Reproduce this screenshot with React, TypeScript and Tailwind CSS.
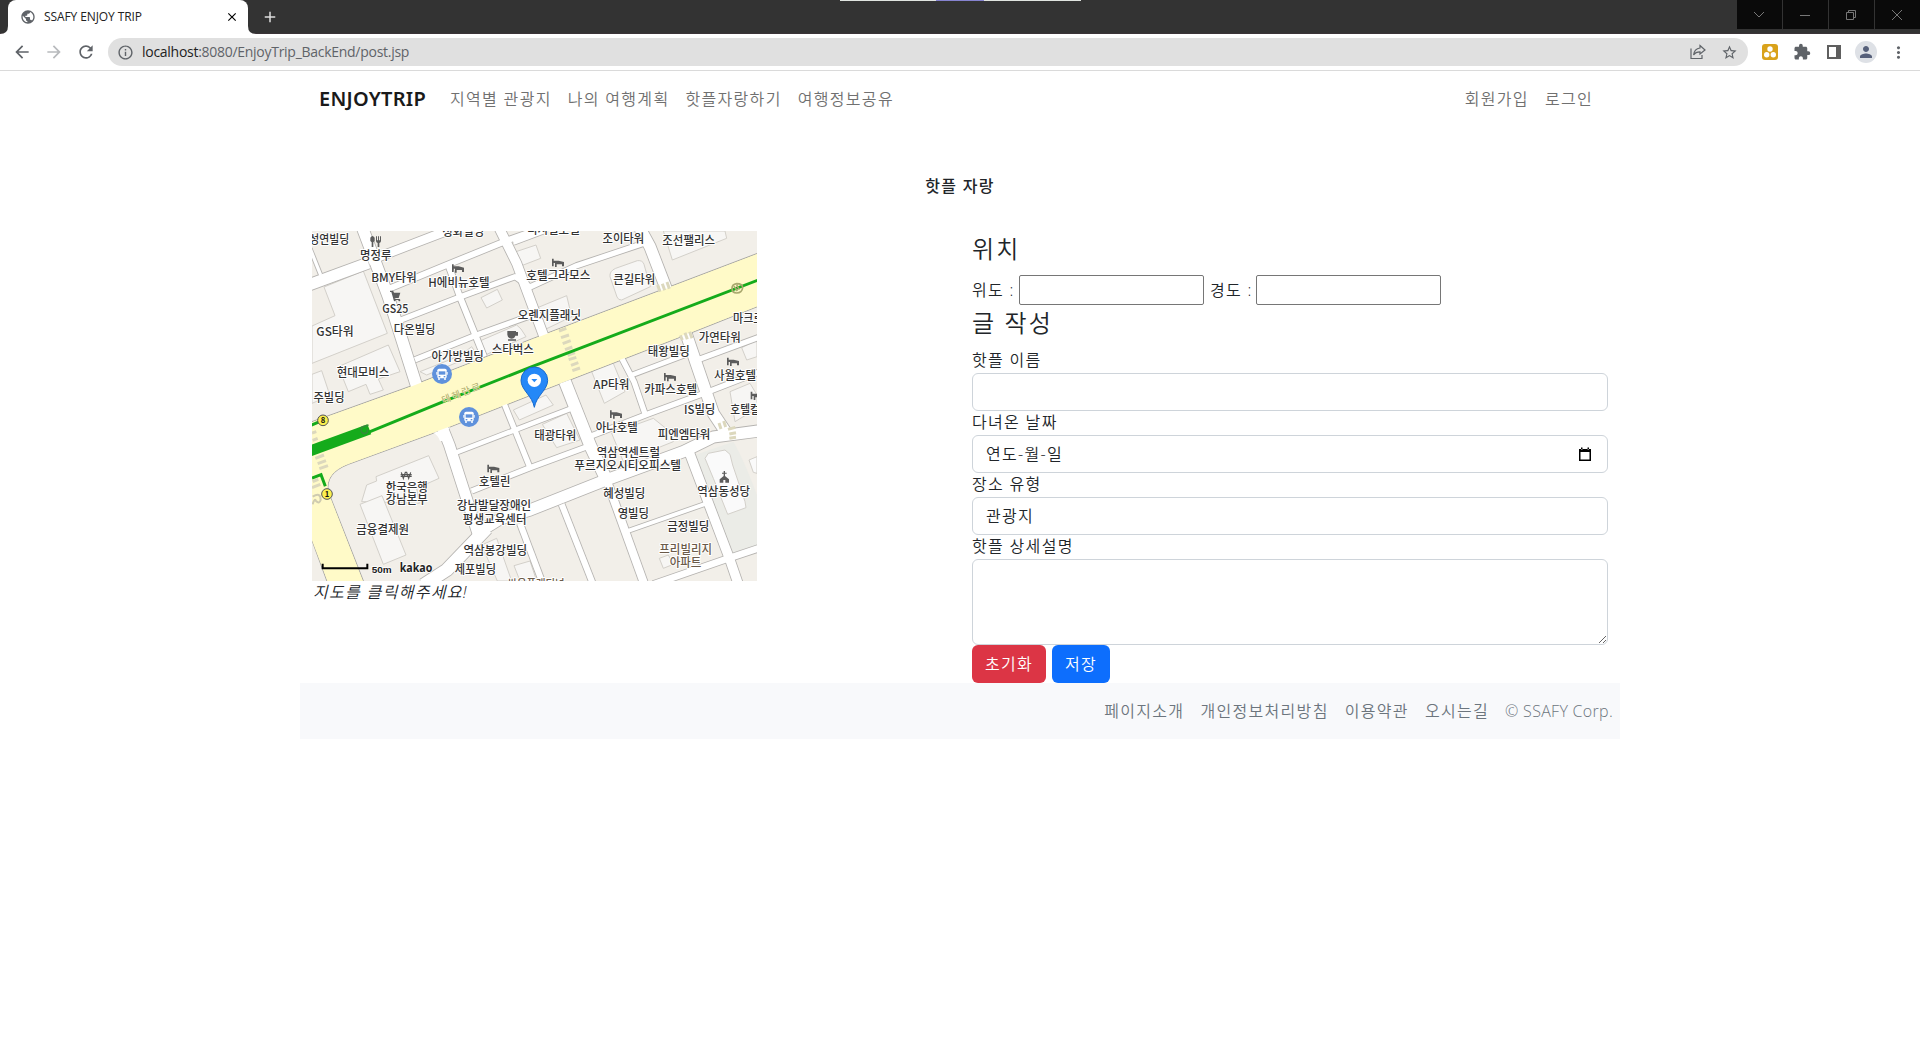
import React from "react";
import {
  MdAdd,
  MdArrowBack,
  MdArrowForward,
  MdClose,
  MdExtension,
  MdInfoOutline,
  MdMoreVert,
  MdPerson,
  MdPublic,
  MdRefresh,
  MdStarBorder,
} from "react-icons/md";

type Road = [string, number];
type Label = [string, number, number, number];

// Map units are thirds of a pixel; the visible window starts at (36, 18).
const roads: Road[] = [
  ["M30 70 L62 150", 10],
  ["M188 10 L265 215 L352 490", 34],
  ["M20 182 L205 114", 34],
  ["M205 108 L330 60 L450 14", 26],
  ["M265 192 L440 120 L625 45 L730 8", 18],
  ["M598 10 L650 115 L732 335", 28],
  ["M295 288 L480 216 L645 155 L690 186 L830 122 L1040 52", 16],
  ["M445 120 L480 216 L552 395", 18],
  ["M345 404 L530 330 L720 262", 16],
  ["M740 14 L640 52", 16],
  ["M1020 10 L1050 65 L1102 200", 34],
  ["M424 600 L448 660 L535 930", 32],
  ["M560 910 L440 1035 L370 1080", 38],
  ["M530 925 L600 882 L690 855 L910 768 L1150 680 L1240 636 L1390 616", 34],
  ["M612 535 L690 728", 16],
  ["M460 686 L720 586 L810 552", 14],
  ["M515 798 L690 728 L865 664", 16],
  ["M795 470 L872 665 L922 770", 36],
  ["M920 765 L1032 1075", 24],
  ["M785 838 L878 1075", 18],
  ["M660 895 L728 1075", 18],
  ["M963 395 L1002 470 L1038 575", 16],
  ["M990 452 L1170 384", 14],
  ["M1158 325 L1240 565 L1280 625", 34],
  ["M1200 402 L1390 332", 16],
  ["M875 632 L1050 565 L1225 500 L1390 436", 16],
  ["M1165 675 L1290 1005 L1314 1075", 28],
  ["M978 920 L1220 835", 12],
  ["M1060 1078 L1285 1000 L1390 965", 20],
];

const buildings = [
  "M72 186 L190 138 L262 325 L36 415 L36 303 L105 272 Z",
  "M36 448 L36 535 L90 512 L65 437 Z",
  "M115 425 L265 360 L300 440 L235 462 L250 495 L210 508 L198 478 L145 500 Z",
  "M543 218 L592 193 L607 225 L560 249 Z",
  "M535 350 L650 300 L663 312 L678 335 L560 388 Z",
  "M648 80 L708 60 L722 100 L665 122 Z",
  "M1090 18 L1275 18 L1280 40 L1117 105 Z",
  "M947 130 L1012 107 Q1028 105 1032 118 L1051 185 L965 225 Q955 226 951 216 L930 155 Q928 138 947 130 Z",
  "M708 250 L800 212 L815 275 L738 312 Z",
  "M875 440 L937 408 L975 500 L913 535 Z",
  "M1325 368 L1371 345 L1371 395 L1340 405 Z",
  "M640 555 L738 510 L760 540 L658 585 Z",
  "M360 440 L480 392 L515 365 L530 388 L380 450 Z",
  "M228 755 L386 692 L417 760 L350 790 L358 835 L185 830 L200 780 L230 768 Z",
  "M180 838 L246 812 L318 990 L250 1018 Z",
  "M545 960 L590 940 L635 1068 L592 1068 Z",
  "M642 1022 L690 1008 L710 1068 L660 1068 Z",
  "M727 598 L800 565 L840 645 L770 668 Z",
  "M935 625 L1060 580 L1110 620 L1120 650 L970 710 Z",
  "M1078 1000 L1105 990 L1120 1018 L1090 1030 Z",
  "M1290 500 L1350 475 L1371 510 L1371 550 L1305 590 Z",
];

const labels: Label[] = [
  ["성연빌딩", 88, 57, 120],
  ["명정루", 227, 104, 94],
  ["BMY타워", 282, 170, 136],
  ["H에비뉴호텔", 477, 185, 184],
  ["GS25", 286, 263, 78],
  ["GS타워", 105, 332, 112],
  ["다온빌딩", 344, 326, 125],
  ["정화빌딩", 490, 34, 126],
  ["스타벅스", 638, 388, 126],
  ["아가방빌딩", 473, 407, 157],
  ["현대모비스", 189, 455, 158],
  ["주빌딩", 87, 530, 93],
  ["오렌지플래닛", 748, 286, 190],
  ["호텔그라모스", 775, 166, 192],
  ["디지털호텔", 760, 26, 158],
  ["조이타워", 970, 53, 125],
  ["조선팰리스", 1166, 60, 158],
  ["큰길타워", 1003, 178, 126],
  ["마크로젠", 1360, 295, 122],
  ["가연타워", 1259, 352, 126],
  ["태왕빌딩", 1106, 393, 126],
  ["사월호텔", 1305, 464, 126],
  ["AP타워", 934, 491, 108],
  ["카파스호텔", 1112, 507, 159],
  ["IS빌딩", 1199, 566, 94],
  ["호텔컬리", 1350, 566, 118],
  ["태광타워", 766, 646, 126],
  ["아나호텔", 950, 622, 126],
  ["피엔엠타워", 1152, 642, 158],
  ["역삼역센트럴", 985, 696, 190],
  ["푸르지오시티오피스텔", 983, 736, 320],
  ["역삼동성당", 1271, 814, 158],
  ["혜성빌딩", 973, 820, 126],
  ["영빌딩", 1000, 880, 94],
  ["금정빌딩", 1165, 917, 126],
  ["호텔린", 584, 784, 94],
  ["강남발달장애인", 582, 856, 223],
  ["평생교육센터", 584, 896, 191],
  ["한국은행", 320, 800, 126],
  ["강남본부", 320, 838, 126],
  ["금융결제원", 248, 926, 158],
  ["역삼봉강빌딩", 586, 989, 191],
  ["제포빌딩", 526, 1048, 124],
];

function Bed({ x, y }: { x: number; y: number }) {
  return (
    <path
      transform={`translate(${x} ${y})`}
      d="M-18 -13 H-13 V-7 H2 L18 -3 V10 H12 V4 H-4 V12 H-9 V0 H-13 V10 H-18 Z"
      fill="#5c5c5c"
    />
  );
}

function BusStop({ x, y }: { x: number; y: number }) {
  return (
    <g transform={`translate(${x} ${y})`}>
      <circle r="30" fill="#5f91dc" />
      <rect x="-14" y="-16" width="28" height="29" rx="5" fill="#fff" />
      <rect x="-10" y="-8" width="20" height="10" fill="#5f91dc" />
      <rect x="-10" y="6" width="5" height="4" fill="#5f91dc" />
      <rect x="5" y="6" width="5" height="4" fill="#5f91dc" />
      <path d="M-12 13 h6 v4 h-6 Z M6 13 h6 v4 h-6 Z M-17 -6 h3 v8 h-3 Z M14 -6 h3 v8 h-3 Z" fill="#fff" />
    </g>
  );
}

function Exit({ x, y, n }: { x: number; y: number; n: string }) {
  return (
    <g transform={`translate(${x} ${y})`}>
      <circle r="16" fill="#fbf04e" stroke="#555" strokeWidth="3" />
      <text y="8" textAnchor="middle" fontSize="23" fontWeight="700" fill="#111">
        {n}
      </text>
    </g>
  );
}

function KakaoMap() {
  return (
    <svg
      viewBox="36 18 1335 1050"
      className="block h-[350px] w-[445px] font-['Noto_Sans_CJK_KR',sans-serif]"
    >
      <rect x="36" y="18" width="1335" height="1050" fill="#f2efe9" />
      <path d="M1185 690 L1300 650 Q1330 700 1371 810 L1371 965 L1300 990 Z" fill="#ebece7" />
      <g fill="#f7f6f4" stroke="#d3d0ca" strokeWidth="3">
        {buildings.map((d) => (
          <path key={d} d={d} />
        ))}
        <path
          d="M1215 700 L1225 685 L1275 675 L1290 688 L1298 720 L1335 830 L1338 848 L1283 868 L1240 760 Z"
          fill="#fafafa"
        />
        <path d="M1347 705 L1371 695 V745 L1360 742 Z" fill="#fafafa" />
      </g>
      <g fill="none" stroke="#b5b3b0" strokeLinejoin="round">
        {roads.map(([d, w]) => (
          <path key={d} d={d} strokeWidth={w + 5} />
        ))}
      </g>
      <path
        d="M30 592 L330 484 L700 340 L1075 198 L1380 82 V242 L1150 333 L720 500 L440 610 L145 718 Q75 745 85 800 L195 1080 H85 L30 930 Z"
        fill="#fffac8"
        stroke="#a9a8a5"
        strokeWidth="3"
      />
      <g fill="none" stroke="#fff" strokeLinejoin="round">
        {roads.map(([d, w]) => (
          <path key={d} d={d} strokeWidth={w} />
        ))}
      </g>
      <path d="M400 624 L450 606 Q436 622 446 648 L420 648 Q414 630 400 624 Z" fill="#fff" />
      <path
        d="M30 594 L330 486 L700 342 L1075 200 L1380 84 V240 L1150 331 L720 498 L440 608 L143 718 Q74 745 84 800 L193 1080 H87 L30 930 Z"
        fill="#fffac8"
      />

      <g stroke="#dcd8bd" strokeWidth="9">
        <path d="M777 318 L799 310 M783 338 L807 330 M788 356 L812 347 M795 374 L817 366 M803 391 L825 383 M806 404 L829 397 M813 421 L835 413 M817 437 L840 429" />
        <path d="M36 624 L49 620 M38 646 L53 640 M46 700 L72 690 M53 716 L78 707 M58 731 L84 722 M38 770 L55 763 M36 788 L61 778" />
        <path d="M1080 200 l-7 -20 M1094 196 l-7 -20 M1108 191 l-7 -20 M1147 345 l-6 -14 M1162 343 l-7 -20 M1176 340 l-7 -20" />
        <path d="M1263 612 l-6 -18 M1277 606 l-6 -18 M1284 613 l22 -6 M1288 627 l20 -4 M1288 640 l20 -3" />
      </g>
      <path d="M38 815 Q62 800 62 825 Q58 838 48 828 Q44 818 38 838" stroke="#cfcbb0" strokeWidth="6" fill="none" />

      <g fill="none" stroke="#15ab1b">
        <path d="M190 628 L430 530 L690 427 L1380 163" strokeWidth="9" />
        <path d="M30 678 L208 613" strokeWidth="32" />
        <path d="M30 602 L68 586 M36 759 L63 749 L76 784" strokeWidth="9" />
      </g>
      <path d="M206 600 l-20 6 q-8 16 6 20 q14 -2 10 -14" fill="none" stroke="#3c8241" strokeWidth="5" opacity="0.8" />
      <path
        d="M1296 190 q0 -12 14 -14 q18 0 18 12 q-2 16 -18 16 q-14 0 -14 -14 M1302 184 l10 14 M1310 180 l8 14"
        fill="none"
        stroke="#a9a86e"
        strokeWidth="5"
      />
      <text
        transform="translate(430 536) rotate(-21)"
        textLength="122"
        fontSize="29"
        fill="#a3a05f"
        stroke="#fffac8"
        strokeWidth="2"
        paintOrder="stroke"
      >
        테헤란로
      </text>

      <Bed x={474} y={131} />
      <Bed x={774} y={114} />
      <Bed x={1110} y={457} />
      <Bed x={1299} y={411} />
      <Bed x={1370} y={513} />
      <Bed x={948} y={569} />
      <Bed x={580} y={732} />
      <g fill="#5c5c5c">
        <path d="M211 38 q6 -10 13 0 q2 10 -4 14 v14 h-5 v-14 q-6 -4 -4 -14 Z M228 34 h3 v12 h3 v-12 h3 v12 h3 v-12 h3 v14 q0 4 -5 6 v12 h-5 v-12 q-5 -2 -5 -6 Z" />
        <path d="M270 197 h9 l3 6 h19 l-5 16 h-12 l1 3 h14 v3 h-18 l-7 -24 h-4 Z" />
        <circle cx="284" cy="226" r="3" />
        <circle cx="298" cy="226" r="3" />
        <path d="M622 318 h26 v3 h6 v11 h-8 q-2 9 -12 9 q-11 -1 -12 -12 Z M624 343 h24 v4 h-24 Z" />
        <path d="M1271 738 h4 v5 h5 v3 h-5 v7 l12 10 v10 h-11 v-8 h-6 v8 h-11 v-10 l12 -10 v-7 h-5 v-3 h5 Z" />
      </g>
      <path d="M304 742 l6 18 l6 -18 h4 l6 18 l6 -18 M302 749 h33 M302 754 h33" fill="none" stroke="#555" strokeWidth="3.5" />

      <g fill="#333" stroke="#fff" strokeWidth="6" strokeLinejoin="round" paintOrder="stroke" fontSize="36">
        {labels.map(([t, x, y, w]) => (
          <text key={t} x={x - w / 2} y={y} textLength={w} lengthAdjust="spacingAndGlyphs" fontWeight="500">
            {t}
          </text>
        ))}
        <g fill="#6b5a49" fontWeight="500">
          <text x="1078" y="986" textLength="158" lengthAdjust="spacingAndGlyphs">프리빌리지</text>
          <text x="1109" y="1027" textLength="95" lengthAdjust="spacingAndGlyphs">아파트</text>
          <text x="622" y="1092" textLength="172" lengthAdjust="spacingAndGlyphs">쌍용플래티넘</text>
        </g>
      </g>

      <BusStop x={426} y={447} />
      <BusStop x={507} y={576} />
      <Exit x={69} y={586} n="8" />
      <Exit x={81} y={807} n="1" />

      <path
        d="M703 547 C697 512 663 495 663 466 A40 40 0 0 1 743 466 C743 495 709 512 703 547 Z"
        fill="#2488f7"
        stroke="#1569cf"
        strokeWidth="3"
      />
      <circle cx="703" cy="466" r="20" fill="#fff" />
      <path d="M694 462 h18 l-9 10 Z" fill="#2488f7" />

      <path d="M68 1016 V1030 H202 V1016" fill="none" stroke="#000" strokeWidth="6" />
      <g fill="#222" stroke="#fff" strokeWidth="4" paintOrder="stroke">
        <text x="215" y="1043" fontSize="28" fontWeight="700" textLength="60" lengthAdjust="spacingAndGlyphs" fontFamily="Liberation Sans, sans-serif">
          50m
        </text>
        <text x="299" y="1040" fontSize="37" fontWeight="700" textLength="98" lengthAdjust="spacingAndGlyphs" fontFamily="Open Sans, sans-serif">
          kakao
        </text>
      </g>
    </svg>
  );
}

function TabCurve({ flip = false }: { flip?: boolean }) {
  return (
    <svg viewBox="0 0 8 8" className={flip ? "size-2 -scale-x-100" : "size-2"}>
      <path d="M8 0 V8 H0 Q8 8 8 0" fill="#fff" />
    </svg>
  );
}

function Browser() {
  return (
    <header className="flex h-[71px] flex-col border-b border-[#dadada] bg-white font-normal">
      <div className="relative flex h-[34px] shrink-0 justify-between border-b border-[#3b3438] bg-[#333]">
        <div className="flex h-[34px] items-end">
          <TabCurve />
          <div className="flex h-[34px] w-[240px] items-center rounded-t-lg bg-white pr-[9px] pl-[12px]">
            <MdPublic className="size-4 text-[#5f6368]" />
            <span className="ml-2 flex-1 font-['Open_Sans','Noto_Sans_CJK_KR',sans-serif] text-[12px] tracking-[-0.100px] text-[#222]">
              SSAFY ENJOY TRIP
            </span>
            <MdClose className="size-[14px] text-black" />
          </div>
          <TabCurve flip />
          <MdAdd className="mb-2 ml-[5px] size-[18px] text-[#ddd]" />
        </div>
        <div className="flex h-[29px] w-[183px] gap-px bg-[#333] text-[#777]">
          {["M4 6 l5 5 l5 -5", "M4 9.5 h10", "M4.500 6.500 h7 v7 h-7 Z M6.500 6.500 v-2 h7 v7 h-2", "M4 4 l10 10 M14 4 l-10 10"].map((d) => (
            <div key={d} className="flex flex-1 items-center justify-center bg-[#0a0a0a]">
              <svg viewBox="0 0 18 18" className="-ml-[2px] size-[18px]" fill="none" stroke="currentColor">
                <path d={d} />
              </svg>
            </div>
          ))}
        </div>
        <div className="absolute top-0 left-[840px] flex h-px w-[241px] justify-center bg-[#e0e4e0]">
          <div className="-ml-[2px] h-px w-12 bg-[#8683d0]" />
        </div>
      </div>
      <div className="flex flex-1 items-center">
        <div className="flex w-[108px] items-center gap-3 pl-3 text-[#5f6368]">
          <MdArrowBack className="size-5" />
          <MdArrowForward className="size-5 text-[#b8babd]" />
          <MdRefresh className="size-5" />
        </div>
        <div className="flex h-7 w-[1640px] items-center rounded-full bg-[#e0e0e0] pr-[10px] pl-[9px] text-[#5f6368]">
          <MdInfoOutline className="size-[17px]" />
          <span className="ml-2 flex-1 font-['Open_Sans','Noto_Sans_CJK_KR',sans-serif] text-[14px] tracking-[-0.280px]">
            <span className="text-[#222]">localhost</span>:8080/EnjoyTrip_BackEnd/post.jsp
          </span>
          <svg viewBox="0 0 16 16" className="mr-[15px] size-4" fill="none" stroke="currentColor" strokeWidth="1.2">
            <path d="M1 4.500 V14.500 H12 V11" />
            <path d="M10 1.500 L15 6 L10 10 V7.800 C7 7.800 5 8.600 3.600 11 C4 7 6.500 4.500 10 4 Z" />
          </svg>
          <MdStarBorder className="size-[17px]" />
        </div>
        <div className="ml-[14px] flex size-4 items-center justify-center rounded-[3px] bg-[#d9a21b]">
          <svg viewBox="0 0 16 16" className="size-4" fill="#fff">
            <circle cx="8" cy="5" r="2.700" />
            <circle cx="4.700" cy="10.800" r="2.700" />
            <circle cx="11.300" cy="10.800" r="2.700" />
          </svg>
        </div>
        <MdExtension className="ml-[15px] size-[18px] text-[#5f6368]" />
        <div className="ml-4 h-[14px] w-[14px] border-2 border-r-[5px] border-[#5f5f5f]" />
        <div className="ml-[14px] flex size-[22px] items-center justify-center rounded-full bg-[#dee1e6]">
          <MdPerson className="size-[18px] text-[#56607a]" />
        </div>
        <MdMoreVert className="ml-3 size-[19px] text-[#5f6368]" />
      </div>
    </header>
  );
}

const control =
  "block w-full rounded-md border border-[#ced4da] bg-white px-[13px] text-[#212529] outline-none";

function Field({ label, children }: { label: string; children: React.ReactNode }) {
  return (
    <label className="block">
      <span className="block h-6 leading-[23px]">{label}</span>
      {children}
    </label>
  );
}

export default function App() {
  return (
    <div className="h-[1040px] w-[1920px] overflow-hidden bg-white font-['Open_Sans','Noto_Sans_CJK_KR',sans-serif] text-[16px] leading-6 font-[350] text-[#212529]">
      <Browser />
      <div className="mx-auto w-[1320px]">
        <nav className="flex h-14 items-center pr-[27px] pl-[19px] text-[#707070]">
          <a className="w-[131px] font-['Noto_Sans',sans-serif] text-[20px] font-semibold tracking-[0.250px] text-[#1a1a1a]">
            ENJOYTRIP
          </a>
          <div className="flex flex-1 gap-4 tracking-[1.320px]">
            <a>지역별 관광지</a>
            <a>나의 여행계획</a>
            <a>핫플자랑하기</a>
            <a>여행정보공유</a>
          </div>
          <div className="flex gap-4 tracking-[1.320px]">
            <a>회원가입</a>
            <a>로그인</a>
          </div>
        </nav>
        <h1 className="mt-[47px] text-center font-medium tracking-[1.320px]">핫플 자랑</h1>
        <main className="mt-[33px] grid grid-cols-2 px-3">
          <section>
            <KakaoMap />
            <em className="block pl-px leading-[23px] tracking-[1.320px]">지도를 클릭해주세요!</em>
          </section>
          <form className="pl-3 tracking-[1.320px]">
            <h2 className="h-11 pt-[3px] text-[24px] leading-[29px] tracking-[2.100px]">위치</h2>
            <div className="flex h-[30px] items-center">
              <span className="w-[47px]">위도 :</span>
              <input className="h-[30px] w-[185px] rounded-[2px] border border-[#767676]" />
              <span className="ml-[6px] w-[46px]">경도 :</span>
              <input className="h-[30px] w-[185px] rounded-[2px] border border-[#767676]" />
            </div>
            <h2 className="h-11 pt-[3px] text-[24px] leading-[29px] tracking-[2.100px]">글 작성</h2>
            <Field label="핫플 이름">
              <input className={`${control} h-[38px]`} />
            </Field>
            <Field label="다녀온 날짜">
              <div className={`${control} flex h-[38px] items-center justify-between`}>
                <span>연도-월-일</span>
                <svg viewBox="0 0 16 16" className="mr-px size-4">
                  <path d="M2 3 h12 v12 h-12 Z M3.500 6 v7.500 h9 V6 Z M4 1.500 h1.500 v2 H4 Z M10.500 1.500 h1.500 v2 h-1.500 Z" fillRule="evenodd" />
                </svg>
              </div>
            </Field>
            <Field label="장소 유형">
              <select className={`${control} h-[38px] appearance-none`}>
                <option>관광지</option>
              </select>
            </Field>
            <Field label="핫플 상세설명">
              <textarea className={`${control} h-[86px] resize-y`} />
            </Field>
            <div className="flex gap-[6px] text-white">
              <button type="button" className="h-[38px] w-[74px] rounded-md bg-[#dc3545] pb-px">초기화</button>
              <button type="button" className="h-[38px] w-[58px] rounded-md bg-[#0d6efd] pb-px">저장</button>
            </div>
          </form>
        </main>
        <footer className="flex h-14 items-center justify-end gap-4 bg-[#f8f9fb] pr-[7px] tracking-[1.320px] text-[#6c757d]">
          <a>페이지소개</a>
          <a>개인정보처리방침</a>
          <a>이용약관</a>
          <a>오시는길</a>
          <a className="tracking-[0.300px]">© SSAFY Corp.</a>
        </footer>
      </div>
    </div>
  );
}
